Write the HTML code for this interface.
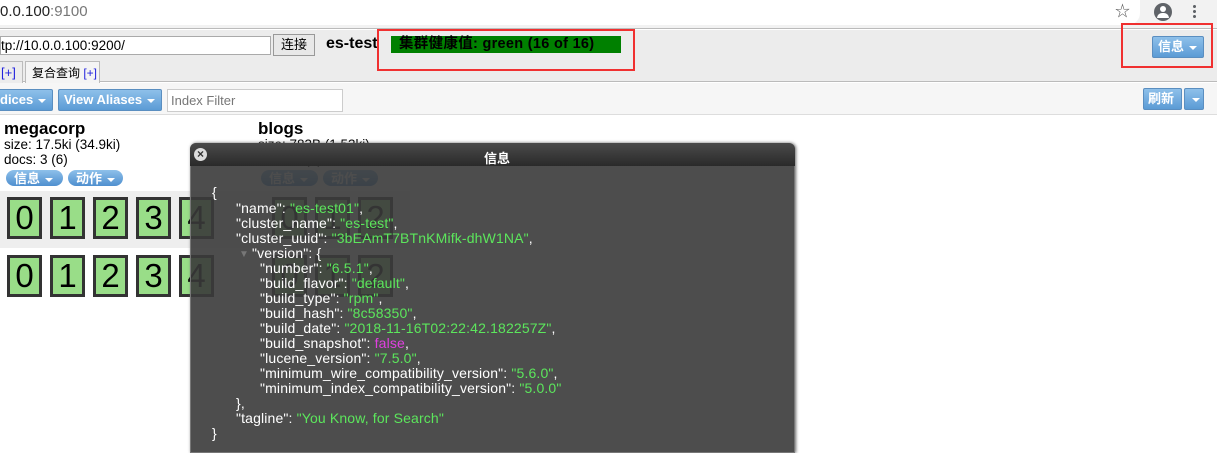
<!DOCTYPE html>
<html><head><meta charset="utf-8"><style>
*{box-sizing:border-box;margin:0;padding:0}
html,body{width:1217px;height:453px;overflow:hidden}
body{background:#fff;font-family:"Liberation Sans","Noto Sans CJK SC",sans-serif;font-size:13px;position:relative;color:#000}
.abs{position:absolute}
.btn{position:absolute;background:linear-gradient(#8ec0ea,#5b9bd5);border:1px solid #5a8ec0;color:#fff;font-weight:bold;font-size:13px;border-radius:2px;line-height:19px;padding-left:5px;white-space:nowrap}
.caret{display:inline-block;border-left:4px solid transparent;border-right:4px solid transparent;border-top:4px solid #fff;vertical-align:middle;margin-left:5px}
.pill{position:absolute;height:16px;border-radius:8px;background:linear-gradient(#8ec0ea,#4f8fcf);color:#fff;font-weight:bold;font-size:13px;line-height:17px;padding-left:8px;overflow:hidden}
.sh{position:absolute;width:35px;height:42px;border:3px solid #333;background:#99dd88;font-size:33px;line-height:36px;text-align:center;color:#000}
.j{position:absolute;color:#fff;font-size:14px;letter-spacing:0.15px;white-space:pre;line-height:15px}
.s{color:#5ce65c}.b{color:#e040e0}
.info{font-size:13.5px}
</style></head><body>
<div class="abs" style="left:0;top:0;width:1217px;height:29px;background:#f2f2f2;border-bottom:1px solid #bbb"></div>
<div class="abs" style="left:0;top:0;width:1140px;height:25px;background:#fff;border-radius:0 0 12px 0"></div>
<div class="abs" style="left:0;top:3px;font-size:15px;color:#222">0.0.100<span style="color:#777">:9100</span></div>
<div class="abs" style="left:1115px;top:0px;font-size:15px;color:#555">☆</div>
<div class="abs" style="left:1154px;top:3px;width:18px;height:18px;border-radius:50%;background:#5f6368"></div>
<div class="abs" style="left:1160px;top:6px;width:6px;height:6px;border-radius:50%;background:#fff"></div>
<div class="abs" style="left:1157px;top:13px;width:12px;height:5px;border-radius:6px 6px 0 0;background:#fff"></div>
<div class="abs" style="left:1193px;top:4px;width:3px;height:14px;background:radial-gradient(circle,#5f6368 1.4px,transparent 1.6px) 0 0/3px 5px"></div>

<div class="abs" style="left:0;top:30px;width:1217px;height:52px;background:#ececec;border-bottom:1px solid #bbb"></div>
<div class="abs" style="left:0;top:36px;width:271px;height:19px;background:#fff;border:1px solid #aaa;font-size:13.5px;line-height:17px">tp://10.0.0.100:9200/</div>
<div class="abs" style="left:273px;top:34px;width:42px;height:22px;background:#e8e8e8;border:1px solid #999;text-align:center;line-height:20px">连接</div>
<div class="abs" style="left:326px;top:35px;font-size:16px;font-weight:bold">es-test</div>
<div class="abs" style="left:391px;top:36px;width:230px;height:17px;background:#008000;font-size:14.5px;font-weight:bold;line-height:17px;padding-left:8px;letter-spacing:0.3px;white-space:nowrap">集群健康值: green (16 of 16)</div>
<div class="abs" style="left:377px;top:29px;width:258px;height:42px;border:2px solid #f03030"></div>
<div class="btn" style="left:1152px;top:36px;width:52px;height:22px">信息<span class="caret"></span></div>
<div class="abs" style="left:1121px;top:23px;width:92px;height:45px;border:2px solid #f03030"></div>
<div class="abs" style="left:-3px;top:61px;width:26px;height:22px;border:1px solid #bbb;border-bottom:none;background:#ececec;color:#22d;line-height:22px;padding-left:3px">[+]</div>
<div class="abs" style="left:25px;top:61px;width:75px;height:22px;border:1px solid #bbb;border-bottom:none;background:#f4f4f4;line-height:22px;padding-left:6px;font-size:12px;white-space:nowrap">复合查询 <span style="color:#22d">[+]</span></div>

<div class="abs" style="left:0;top:83px;width:1217px;height:32px;background:#f6f6f6;border-bottom:1px solid #ddd"></div>
<div class="btn" style="left:-2px;top:89px;width:55px;height:22px;padding-left:1px">dices<span class="caret"></span></div>
<div class="btn" style="left:58px;top:89px;width:104px;height:22px">View Aliases<span class="caret"></span></div>
<div class="abs" style="left:167px;top:89px;width:176px;height:23px;background:#fff;border:1px solid #ccc;color:#777;line-height:21px;padding-left:3px">Index Filter</div>
<div class="btn" style="left:1143px;top:88px;width:39px;height:22px;padding-left:4px">刷新</div>
<div class="btn" style="left:1184px;top:88px;width:20px;height:22px;padding-left:2px"><span class="caret"></span></div>

<div class="abs" style="left:4px;top:119px;font-size:17px;font-weight:bold">megacorp</div>
<div class="abs info" style="left:4px;top:137px">size: 17.5ki (34.9ki)</div>
<div class="abs info" style="left:4px;top:152px">docs: 3 (6)</div>
<div class="pill" style="left:6px;top:170px;width:57px">信息<span class="caret"></span></div>
<div class="pill" style="left:68px;top:170px;width:55px">动作<span class="caret"></span></div>
<div class="abs" style="left:258px;top:119px;font-size:17px;font-weight:bold">blogs</div>
<div class="abs info" style="left:258px;top:137px">size: 783B (1.53ki)</div>
<div class="abs info" style="left:258px;top:152px">docs: 0 (0)</div>
<div class="pill" style="left:261px;top:170px;width:57px">信息<span class="caret"></span></div>
<div class="pill" style="left:323px;top:170px;width:55px">动作<span class="caret"></span></div>

<div class="abs" style="left:0;top:191px;width:410px;height:57px;background:#eee"></div>
<div class="sh" style="left:7px;top:197px">0</div><div class="sh" style="left:50px;top:197px">1</div><div class="sh" style="left:93px;top:197px">2</div><div class="sh" style="left:136px;top:197px">3</div><div class="sh" style="left:179px;top:197px">4</div>
<div class="sh" style="left:272px;top:197px">0</div><div class="sh" style="left:315px;top:197px">1</div><div class="sh" style="left:358px;top:197px">2</div>
<div class="sh" style="left:7px;top:255px">0</div><div class="sh" style="left:50px;top:255px">1</div><div class="sh" style="left:93px;top:255px">2</div><div class="sh" style="left:136px;top:255px">3</div><div class="sh" style="left:179px;top:255px">4</div>
<div class="sh" style="left:272px;top:255px">0</div><div class="sh" style="left:315px;top:255px">1</div><div class="sh" style="left:358px;top:255px">2</div>

<div class="abs" style="left:190px;top:143px;width:605px;height:310px;border-radius:6px 6px 0 0;background:rgba(58,58,58,0.9);box-shadow:1px 0 3px #666;border:1px solid #777"></div>
<div class="abs" style="left:190px;top:143px;width:605px;height:23px;border-radius:6px 6px 0 0;background:linear-gradient(#4a4a4a,#2a2a2a)"></div>
<div class="abs" style="left:194px;top:148px;width:13px;height:13px;border-radius:50%;background:#ddd;color:#333;font-size:12px;font-weight:bold;line-height:13px;text-align:center">×</div>
<div class="abs" style="left:484px;top:148px;color:#fff;font-weight:bold;font-size:13px">信息</div>
<div class="j" style="left:212px;top:185px">{</div>
<div class="j" style="left:236px;top:201px">"name": <span class="s">"es-test01"</span>,
"cluster_name": <span class="s">"es-test"</span>,
"cluster_uuid": <span class="s">"3bEAmT7BTnKMifk-dhW1NA"</span>,</div>
<div class="j" style="left:239px;top:247px;color:#777;font-size:10px">▼</div>
<div class="j" style="left:252px;top:246px">"version": {</div>
<div class="j" style="left:260px;top:261px">"number": <span class="s">"6.5.1"</span>,
"build_flavor": <span class="s">"default"</span>,
"build_type": <span class="s">"rpm"</span>,
"build_hash": <span class="s">"8c58350"</span>,
"build_date": <span class="s">"2018-11-16T02:22:42.182257Z"</span>,
"build_snapshot": <span class="b">false</span>,
"lucene_version": <span class="s">"7.5.0"</span>,
"minimum_wire_compatibility_version": <span class="s">"5.6.0"</span>,
"minimum_index_compatibility_version": <span class="s">"5.0.0"</span></div>
<div class="j" style="left:236px;top:396px">},
"tagline": <span class="s">"You Know, for Search"</span></div>
<div class="j" style="left:212px;top:426px">}</div>
</body></html>
